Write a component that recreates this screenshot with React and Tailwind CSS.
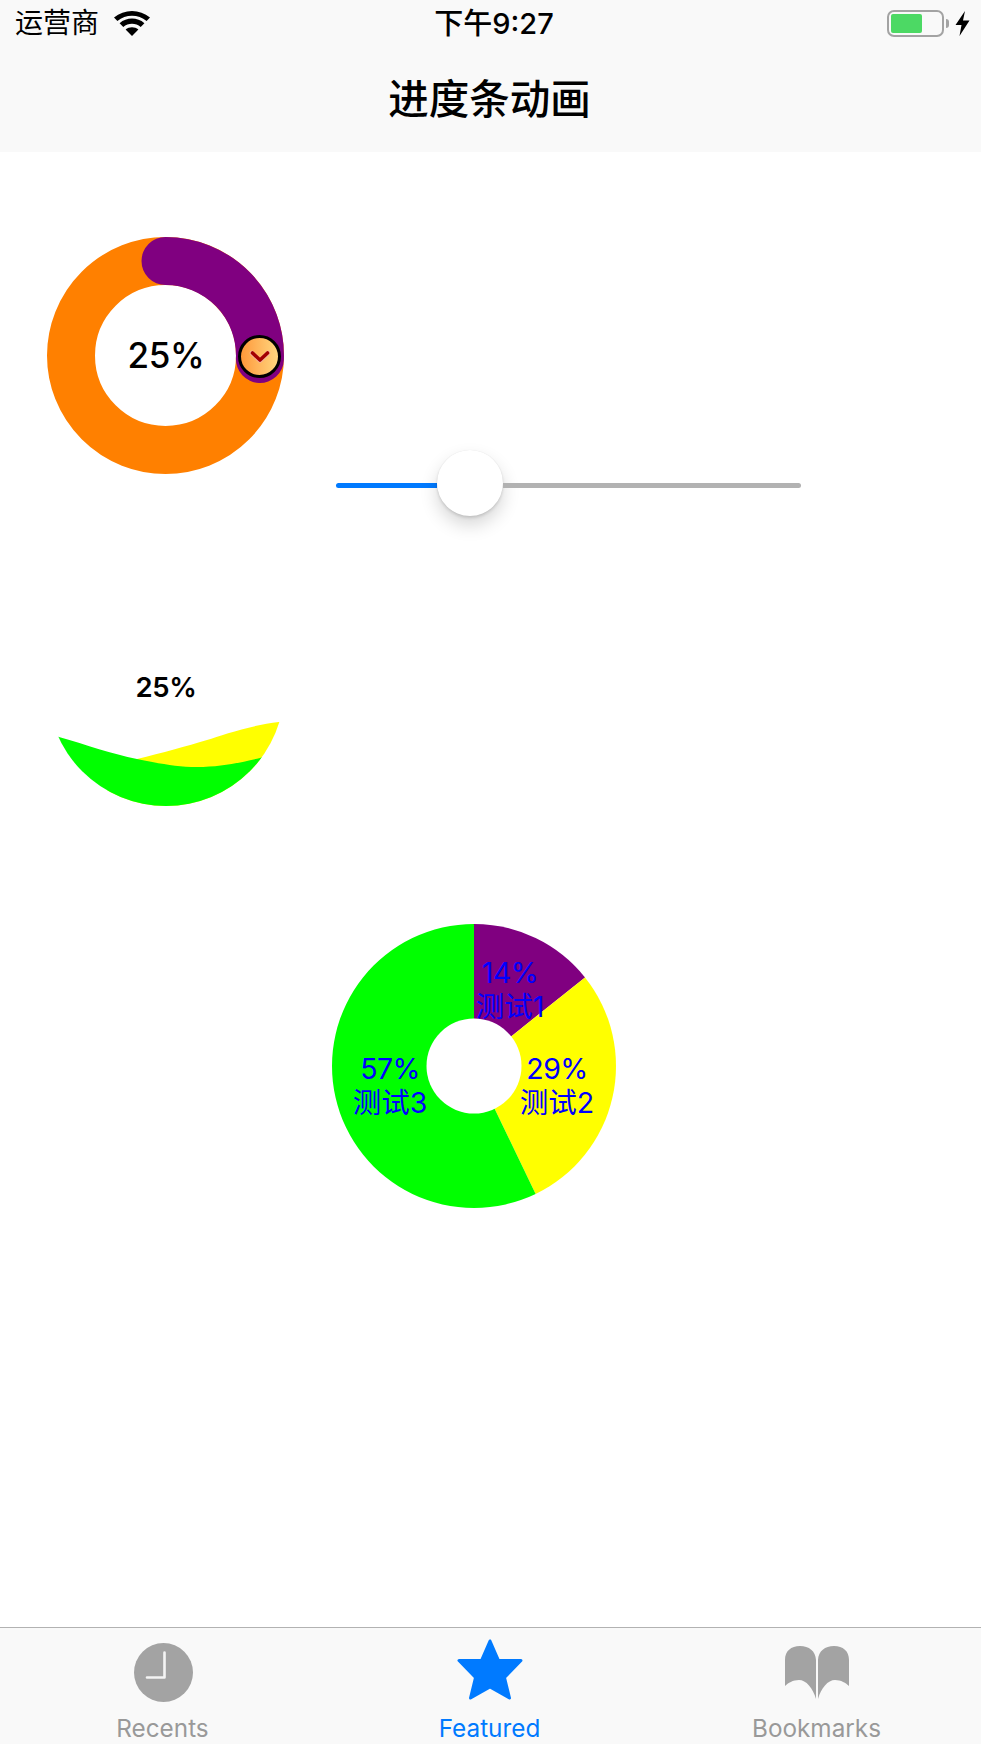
import React from 'react';

const slices = [
  { from: 0, to: 1 / 7, color: '#800080' },
  { from: 1 / 7, to: 3 / 7, color: '#ffff00' },
  { from: 3 / 7, to: 1, color: '#00ff00' },
];

// ring slice path, fractions run clockwise from 12 o'clock
function slicePath(from, to, r, cx, cy) {
  const a0 = from * 2 * Math.PI;
  const a1 = to * 2 * Math.PI;
  const large = to - from > 0.5 ? 1 : 0;
  const x0 = cx + r * Math.sin(a0);
  const y0 = cy - r * Math.cos(a0);
  const x1 = cx + r * Math.sin(a1);
  const y1 = cy - r * Math.cos(a1);
  return `M${cx},${cy} L${x0},${y0} A${r},${r} 0 ${large} 1 ${x1},${y1} Z`;
}

function StatusBar() {
  return (
    <div className="h-[47px] bg-[#f9f9f9] flex items-center justify-between relative pl-[15px] pr-[11px]">
      <div className="flex items-center gap-[15px]">
        <span className="text-[28px] leading-[47px] text-black">运营商</span>
        <svg width="36" height="26" viewBox="0 0 36 26">
          <path d="M18 25 L11.6 18.6 C15.2 15.4 20.8 15.4 24.4 18.6 Z" fill="#000" />
          <path d="M9.3 16 L5.6 12.2 C12.6 6 23.4 6 30.4 12.2 L26.7 16 C21.8 11.6 14.2 11.6 9.3 16 Z" fill="#000" />
          <path d="M3.4 10 L0 6.6 C10.2 -2.2 25.8 -2.2 36 6.6 L32.6 10 C24.2 3 11.8 3 3.4 10 Z" fill="#000" />
        </svg>
      </div>
      <span className="absolute left-[493px] -translate-x-[calc(50%-1px)] text-[29px] leading-[49px] font-medium text-black">下午9:27</span>
      <div className="flex items-center">
        <div className="w-[57px] h-[27px] rounded-[7px] border-[2px] border-[#a3a3a3] p-[2px]">
          <div className="w-[31px] h-full rounded-[2px] bg-[#4cd964]" />
        </div>
        <div className="w-[3px] h-[9px] ml-[2px] rounded-r-[3px] bg-[#a3a3a3]" />
        <svg className="ml-[6px]" width="15" height="25" viewBox="0 0 15 25">
          <path d="M10 0 L0.5 14 L6.5 14 L4.5 25 L14.5 9.5 L8 9.5 Z" fill="#000" />
        </svg>
      </div>
    </div>
  );
}

function ProgressRing() {
  return (
    <div className="relative w-[237px] h-[237px] shrink-0">
      <svg width="237" height="237" viewBox="0 0 237 237">
        <circle cx="118.5" cy="118.5" r="94.5" fill="none" stroke="#ff8000" strokeWidth="48" />
        <path d="M118.5 24 A94.5 94.5 0 0 1 212.9 122" fill="none" stroke="#800080" strokeWidth="48" strokeLinecap="round" />
      </svg>
      <div className="absolute inset-0 flex items-center justify-center pl-px text-[35px] leading-none font-medium tracking-[-0.01em] text-black font-['Inter','Liberation_Sans',sans-serif]">25%</div>
      <div className="absolute left-[191px] top-[98px] w-[43px] h-[43px] rounded-full border-[3px] border-black bg-linear-to-r from-[#ff9838] to-[#ffd67e] flex items-center justify-center">
        <svg width="22" height="14" viewBox="0 0 22 14">
          <path d="M3 3 L11 10.5 L19 3" fill="none" stroke="#f2b5a0" strokeWidth="4.5" strokeLinecap="round" strokeLinejoin="round" />
          <path d="M3.5 3 L11 10 L18.5 3" fill="none" stroke="#a30000" strokeWidth="3.6" strokeLinecap="round" strokeLinejoin="round" />
        </svg>
      </div>
    </div>
  );
}

function Slider() {
  return (
    <div className="ml-[52px] mt-[213px] w-[465px] h-[66px] flex items-center">
      <div className="w-[101px] h-[5px] mt-1 rounded-l-full bg-[#007aff]" />
      <div className="w-[66px] h-[66px] shrink-0 rounded-full bg-white shadow-[0_9px_18px_rgba(0,0,0,0.16),0_2px_3px_rgba(0,0,0,0.12),0_0_1px_rgba(0,0,0,0.1)]" />
      <div className="flex-1 h-[5px] mt-1 rounded-r-full bg-[#b2b2b2]" />
    </div>
  );
}

function WaveBall() {
  return (
    <div className="relative w-[237px] h-[237px] ml-[47px] mt-[53px]">
      <svg width="237" height="237" viewBox="0 0 237 237">
        <defs>
          <clipPath id="ball">
            <circle cx="119" cy="118.5" r="118.5" />
          </clipPath>
        </defs>
        <g clipPath="url(#ball)">
          <path d="M60 198 L90 190 C115 184 140 177 160 171 C175 166 205 156 232 153 L240 152 L240 240 L60 240 Z" fill="#ffff00" />
          <path d="M0 164 L12 168 C40 176 65 185 90 190 C115 195 130 198 150 198 C175 198 195 193 213 189 L240 178 L240 240 L0 240 Z" fill="#00ff00" />
        </g>
      </svg>
      <div className="absolute inset-0 flex items-center justify-center pl-px text-[27.5px] leading-none font-semibold tracking-[-0.01em] text-black font-['Inter','Liberation_Sans',sans-serif]">25%</div>
    </div>
  );
}

function PieLabel({ className, percent, name }) {
  return (
    <div className={`absolute -translate-x-1/2 -translate-y-1/2 text-center whitespace-nowrap text-[28.5px] leading-[34px] text-[#0000ff] ${className}`}>
      <div className="tracking-[-0.02em]">{percent}</div>
      <div>{name}</div>
    </div>
  );
}

function PieChart() {
  return (
    <div className="relative w-[284px] h-[284px] ml-[332px] mt-[118px]">
      <svg width="284" height="284" viewBox="0 0 284 284">
        {slices.map((s) => (
          <path key={s.color} d={slicePath(s.from, s.to, 142, 142, 142)} fill={s.color} />
        ))}
        <circle cx="142" cy="142" r="47.5" fill="#fff" />
      </svg>
      <PieLabel className="left-[178px] top-[66px]" percent="14%" name="测试1" />
      <PieLabel className="left-[225px] top-[162px]" percent="29%" name="测试2" />
      <PieLabel className="left-[58px] top-[162px]" percent="57%" name="测试3" />
    </div>
  );
}

function TabItem({ label, active, children }) {
  return (
    <div className="relative flex flex-col items-center -ml-[2px]">
      <div className="h-[86px] flex items-start justify-center">{children}</div>
      <span className={`text-[24.3px] leading-[28px] ${active ? 'text-[#007aff]' : 'text-[#999999]'}`}>{label}</span>
    </div>
  );
}

function TabBar() {
  return (
    <div className="h-[117px] bg-[#f9f9f9] border-t border-[#b2b2b2] grid grid-cols-3">
      <TabItem label="Recents">
        <svg className="mt-[15px] ml-[2px]" width="59" height="59" viewBox="0 0 59 59">
          <circle cx="29.5" cy="29.5" r="29.5" fill="#a3a3a3" />
          <path d="M30.5 9.5 L30.5 34.5 L13 34.5" fill="none" stroke="#f4f4f4" strokeWidth="2.6" strokeLinecap="round" strokeLinejoin="round" />
        </svg>
      </TabItem>
      <TabItem label="Featured" active>
        <svg className="mt-[11px]" width="66" height="61" viewBox="0 0 66 61">
          <path
            d="M33 2 L41.5 21.5 L64 21.5 L47.5 38.5 L52.5 59 L33 48 L13.5 59 L18.5 38.5 L2 21.5 L24.5 21.5 Z"
            fill="#007aff"
            stroke="#007aff"
            strokeWidth="3"
            strokeLinejoin="round"
          />
        </svg>
      </TabItem>
      <TabItem label="Bookmarks">
        <svg className="mt-[18px]" width="64" height="53" viewBox="0 0 64 53">
          <path d="M0 14 C0 5 6 0 15 0 C24 0 30.5 5 31 14 L31 53 C28 42 21 34 14 34 C8 34 3 37 0 40 Z" fill="#a3a3a3" />
          <path d="M64 14 C64 5 58 0 49 0 C40 0 33.5 5 33 14 L33 53 C36 42 43 34 50 34 C56 34 61 37 64 40 Z" fill="#a3a3a3" />
        </svg>
      </TabItem>
    </div>
  );
}

export default function App() {
  return (
    <div className="w-[981px] h-[1744px] bg-white flex flex-col font-['Inter','Noto_Sans_CJK_SC',sans-serif]">
      <StatusBar />
      <div className="h-[105px] bg-[#f9f9f9] flex items-center justify-center pt-[2px] pr-[2px]">
        <h1 className="text-[40.5px] leading-none font-medium text-black">进度条动画</h1>
      </div>
      <div className="flex-1 pt-[85px]">
        <div className="flex items-start pl-[47px]">
          <ProgressRing />
          <Slider />
        </div>
        <WaveBall />
        <PieChart />
      </div>
      <TabBar />
    </div>
  );
}
